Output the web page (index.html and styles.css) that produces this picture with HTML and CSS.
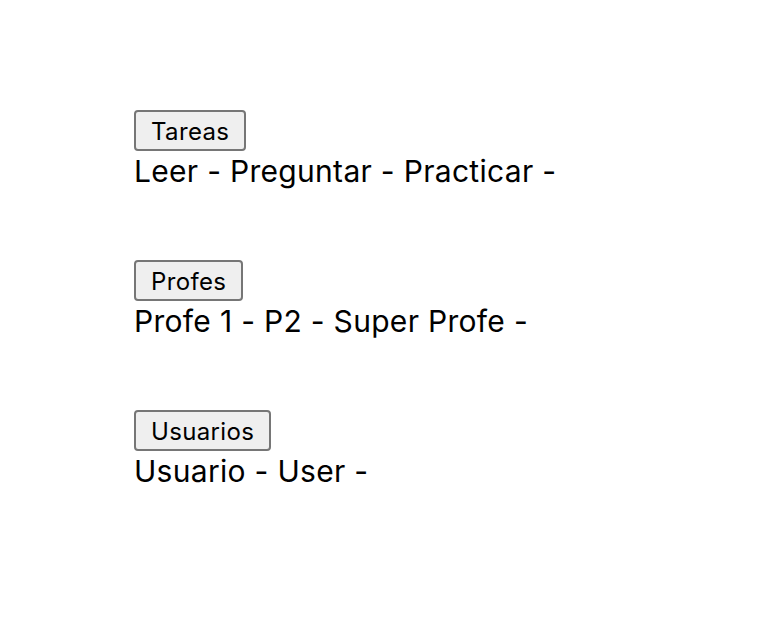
FILE: index.html
```html
<!DOCTYPE html>
<html>
<head>
<meta charset="utf-8">
<link rel="stylesheet" href="styles.css">
</head>
<body>
<div class="list">
  <section class="group">
    <button class="btn">Tareas</button>
    <div class="items">Leer - Preguntar - Practicar - </div>
  </section>
  <section class="group">
    <button class="btn">Profes</button>
    <div class="items">Profe 1 - P2 - Super Profe - </div>
  </section>
  <section class="group">
    <button class="btn">Usuarios</button>
    <div class="items">Usuario - User - </div>
  </section>
</div>
</body>
</html>
```

FILE: styles.css
```css
html, body {
  margin: 0;
  padding: 0;
  background: #fff;
}
body {
  font-family: Inter, "Liberation Sans", Arial, sans-serif;
  color: #000;
}
.list {
  padding: 110px 0 0 134px;
  display: flex;
  flex-direction: column;
}
.group {
  height: 150px;
  display: flex;
  flex-direction: column;
  align-items: flex-start;
}
.btn {
  font-family: Inter, "Liberation Sans", Arial, sans-serif;
  font-size: 24px;
  letter-spacing: 0.35px;
  color: #000;
  background: #efefef;
  border: 2px solid #767676;
  border-radius: 4px;
  padding: 5px 15px 2px;
  height: 41px;
  line-height: 30px;
}
.items {
  font-size: 30px;
  line-height: 40px;
  letter-spacing: 0.3px;
}
```
